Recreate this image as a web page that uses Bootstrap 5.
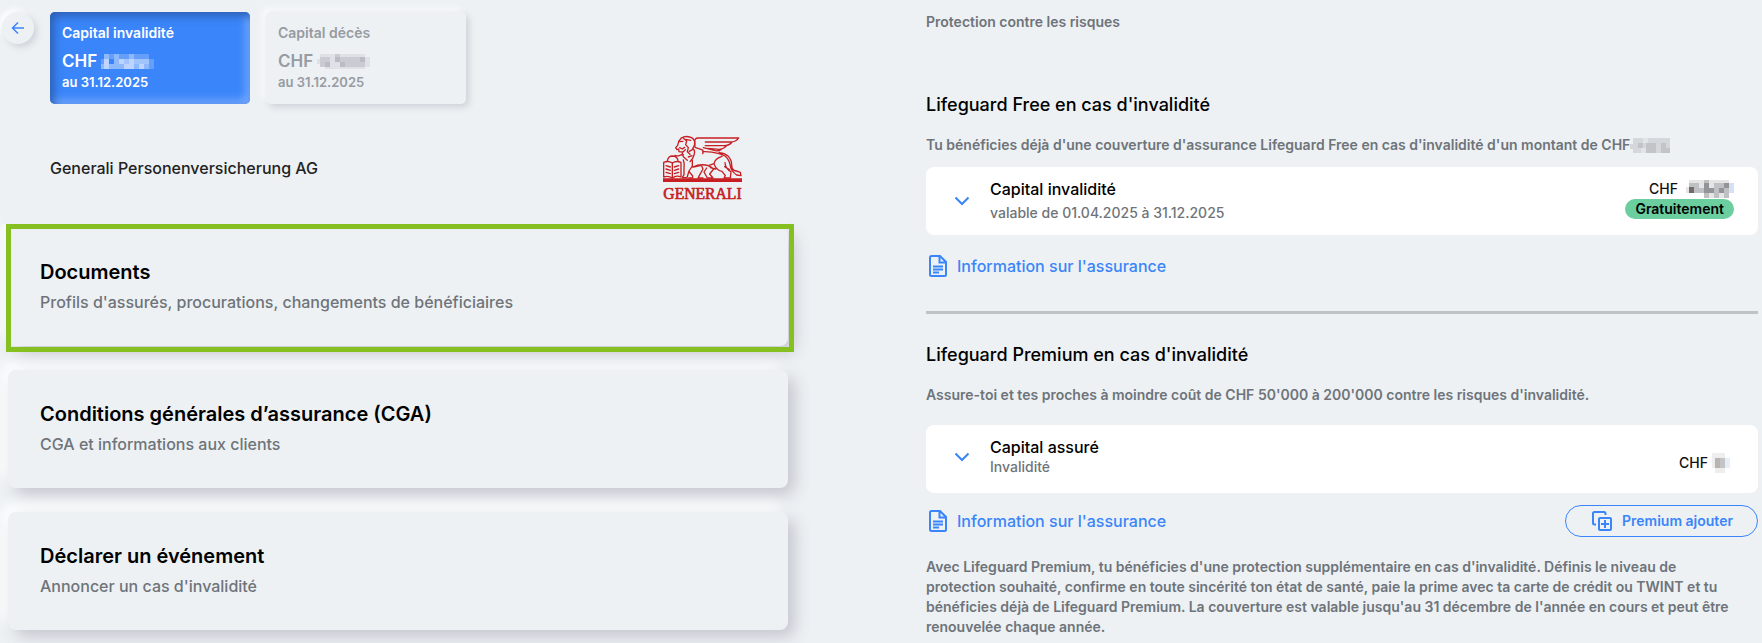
<!DOCTYPE html>
<html lang="fr">
<head>
<meta charset="utf-8">
<meta name="viewport" content="width=device-width, initial-scale=1">
<title>Protection contre les risques</title>
<link href="https://cdn.jsdelivr.net/npm/bootstrap@5.3.0/dist/css/bootstrap.min.css" rel="stylesheet">
<style>
  :root { --ground: #edf1f4; --accent: #3a85f9; --muted: #6e747a; }
  body { min-height: 100vh; background: var(--ground); color: #000; font-family: Inter, "Open Sans", sans-serif; font-weight: 500; font-size: 16px; line-height: 20px; }
  svg { display: block; flex: none; }
  .muted-text { color: var(--muted); }
  .accent { color: var(--accent); }
  .fs-13 { font-size: 13px; }
  .fs-14 { font-size: 14px; }
  .fs-18 { font-size: 18px; }
  .fs-20 { font-size: 20px; }
  .semi { font-weight: 600; }

  .pane-left { padding: 12px 93px 0 2px; }
  .pane-right { padding: 12px 4px 0 45px; }

  .back-btn { width: 32px; height: 32px; background: var(--ground); box-shadow: 3px 3px 7px #cfd1d8, -3px -3px 7px #fff; }
  .capital-tile { width: 200px; padding: 12px; border-radius: 5px; border: 0; text-align: left; background: var(--ground); color: #979ba2; box-shadow: 3px 3px 7px #cfd1d8, -4px -4px 6px #f9fafc; }
  .capital-tile.active { background: var(--accent); color: #fff; box-shadow: inset 4px 4px 8px #2b5fb4, inset -4px -4px 8px #79acff; }
  .tile-label { line-height: 18px; margin-bottom: 8px; }
  .tile-amount { font-size: 17px; line-height: 22px; }

  .insurer { background: var(--ground); z-index: 1; margin-top: 16px; padding: 16px 46px 24px 48px; color: #222; }
  .insurer svg { overflow: visible; }
  .panel-stack { margin: 4px 0 0 6px; gap: 24px; }
  .panel-link { padding: 32px 32px 34px; border-radius: 8px; background: var(--ground); color: #000; box-shadow: 7px 7px 16px #c6c7d0, -7px -7px 14px #fff; }
  .panel-link h2 { line-height: 24px; margin-bottom: 8px; }
  .highlight-frame { inset: -4px -6px -6px -2px; border: 5px solid #86bf20; z-index: 2; pointer-events: none; }

  .intro { margin-bottom: 61px; }
  .cover-title { line-height: 24px; margin-bottom: 18px; }
  .cover-lead { margin-bottom: 12px; }
  .cover-lead-wide { margin-bottom: 20px; }
  .cover-card { min-height: 68px; border-radius: 8px; background: #fff; padding: 12px 24px 12px 28px; }
  .cover-card .toggle { width: 16px; }
  .cover-card .cover-name { margin-left: 20px; }
  .amount { font-size: 14px; color: #111; }
  .free-badge { background: #6bce9f; color: #000; line-height: 20px; padding: 0 10px; border-radius: 10px; }
  .info-link { gap: 10px; padding-left: 3px; }
  .info-link-free { margin-top: 20px; }
  .rule { height: 3px; background: #bec3c6; opacity: 1; border: 0; margin: 34px 0 29px; }
  .add-btn { height: 32px; border: 1px solid var(--accent); border-radius: 16px; gap: 10px; padding: 0 24px 0 26px; background: transparent; }
  .explain { margin: 20px 0 0; }
</style>
</head>
<body>
<main class="container-fluid p-0">
  <div class="row g-0">
    <section class="col-6 pane-left">
      <div class="d-flex align-items-start gap-3">
        <button class="btn back-btn rounded-circle p-0 border-0 d-flex align-items-center justify-content-center" type="button" aria-label="Retour">
          <svg width="14" height="14" viewBox="0 0 14 14" fill="none" stroke="#3a85f9" stroke-width="1.5"><path d="M13 7H2M7 1.5 1.5 7 7 12.5"/></svg>
        </button>
        <button type="button" class="capital-tile active semi">
          <span class="d-block fs-14 tile-label">Capital invalidité</span>
          <span class="d-flex align-items-center tile-amount">CHF
            <svg class="ms-1" width="53" height="15" viewBox="0 0 53 15" shape-rendering="crispEdges" aria-hidden="true"><path fill="#669ffa" d="M3 0h45v5H3zM0 5h8v5H0zM48 5h5v10h-5z"/><path fill="#8db8fb" d="M3 0h5v5H3zM13 0h5v5h-5zM28 0h5v5h-5zM0 10h48v5H0zM13 5h35v5H13z"/><path fill="#bdd5fe" d="M3 5h5v10H3zM18 5h5v5h-5zM28 5h5v5h-5zM23 10h10v5H23zM38 10h5v5h-5z"/><path fill="#a1c4fd" d="M33 5h15v5H33zM23 5h5v5h-5z"/></svg>
          </span>
          <span class="d-block fs-13">au 31.12.2025</span>
        </button>
        <button type="button" class="capital-tile semi">
          <span class="d-block fs-14 tile-label">Capital décès</span>
          <span class="d-flex align-items-center tile-amount">CHF
            <svg class="ms-1" width="53" height="15" viewBox="0 0 53 15" shape-rendering="crispEdges" aria-hidden="true"><path fill="#dfe1e6" d="M3 0h45v15H8v-5H0V5h3zM48 3h5v10h-5z"/><path fill="#c9ccd2" d="M3 3h10v10H3zM23 3h25v10H23zM18 0h5v5h-5z"/><path fill="#b9bcc3" d="M8 8h5v5H8zM18 3h5v5h-5zM23 8h5v5h-5zM43 3h5v5h-5z"/></svg>
          </span>
          <span class="d-block fs-13">au 31.12.2025</span>
        </button>
      </div>

      <div class="insurer position-relative d-flex align-items-center justify-content-between">
        <span>Generali Personenversicherung AG</span>
        <svg width="79" height="64" viewBox="69 33 237 192" role="img" aria-label="Generali" fill="none" stroke="#c71f23" stroke-width="4" stroke-linejoin="round" stroke-linecap="round">
          <path fill="#c71f23" stroke="none" d="M69 160h237v11H69z"/>
          <path d="M71 112q14-6 26 2 12-8 26-2v44q-14-6-26 3-12-8-26-3zM97 114v43M78 122l13 4M78 132l13 4M78 142l13 4M116 122l-13 4M116 132l-13 4M116 142l-13 4"/>
          <path d="M82 108q2-15 16-15 13 1 16 13M105 91q10 4 17-1l8-1"/>
          <path d="M124 39q11-7 25-3 12 3 15 14 2 11-6 20 9 8 4 20-3 12-12 20M124 39l-8 10-3 12-6 7 4 6 5-2 1 8 12 1 7-7M116 50l13-1M130 40l10 8-3 11 8 9-3 12 8 8M119 68l8 4 7-5M126 82l4 13 12 11M137 43l15 3M157 74l-9 5M156 92l-11 4"/>
          <path d="M296 39H174q-10 0-10 12l1 16 20 7q8 3 3 12M296 39q-8 12-25 12h-75M276 51q-8 11-24 11h-56M260 62q-8 10-22 11l-34-3M244 73q-9 6-18 4l-36-9M188 80q24-1 46 5l12 4"/>
          <path d="M246 89q-13-11-7-6 17 2 26 11 11 12 10 28 1 15 14 16l12 4 2 10-13-2q-17-12-19-27-3-20-16-30z"/>
          <path d="M130 105q4 12 2 22v22l-5 9h14l6-20 10-15v-17M147 139l11 14v6h-12M158 126q25-11 47-4l17-6q3-16 24-22M205 122q10 5 16 10l-12 15 10 12h-17l-10-18 8-12M160 126l24-5 5 11-11 20-4 7h15M222 116q6 20 24 23l10 13-4 7h19l2-19q-17-9-18-27M211 128l16 4M268 134l-14-9"/>
          <text x="70" y="221" font-family="'Liberation Serif', serif" font-size="47" font-weight="400" fill="#c71f23" stroke="#c71f23" stroke-width="2">GENERALI</text>
        </svg>
      </div>

      <nav class="panel-stack d-flex flex-column">
        <div class="position-relative">
          <a href="#documents" class="panel-link d-block text-decoration-none">
            <h2 class="fs-20 semi">Documents</h2>
            <span class="d-block muted-text">Profils d'assurés, procurations, changements de bénéficiaires</span>
          </a>
          <div class="highlight-frame position-absolute"></div>
        </div>
        <a href="#cga" class="panel-link d-block text-decoration-none">
          <h2 class="fs-20 semi">Conditions générales d’assurance (CGA)</h2>
          <span class="d-block muted-text">CGA et informations aux clients</span>
        </a>
        <a href="#evenement" class="panel-link d-block text-decoration-none">
          <h2 class="fs-20 semi">Déclarer un événement</h2>
          <span class="d-block muted-text">Annoncer un cas d'invalidité</span>
        </a>
      </nav>
    </section>

    <section class="col-6 pane-right">
      <p class="intro fs-14 semi muted-text">Protection contre les risques</p>

      <h2 class="cover-title fs-18">Lifeguard Free en cas d'invalidité</h2>
      <p class="cover-lead d-flex align-items-center fs-14 semi muted-text">
        <span>Tu bénéficies déjà d'une couverture d'assurance Lifeguard Free en cas d'invalidité d'un montant de CHF</span>
        <svg width="40" height="15" viewBox="0 0 40 15" shape-rendering="crispEdges" aria-hidden="true"><path fill="#d4d7db" d="M3 0h37v15H3v-4H0V6h3z"/><path fill="#c2c4c7" d="M8 5h5v5H8zM16 5h10v10H16zM31 5h5v5h-5zM31 10h9v5h-9z"/><path fill="#e1e4e8" d="M13 0h5v5h-5zM11 10h5v5h-5z"/></svg>
      </p>
      <div class="cover-card d-flex align-items-start justify-content-between">
        <div class="d-flex align-items-center">
          <button type="button" class="toggle btn p-0 border-0" aria-label="Afficher le détail"><svg width="16" height="10" viewBox="0 0 16 10" fill="none" stroke="#3a85f9" stroke-width="2"><path d="m1.500 1.500 6.500 6.500 6.500-6.500"/></svg></button>
          <div class="cover-name">
            <div class="mb-1">Capital invalidité</div>
            <div class="fs-14 muted-text">valable de 01.04.2025 à 31.12.2025</div>
          </div>
        </div>
        <div class="d-flex flex-column align-items-end">
          <div class="amount d-flex align-items-center">CHF
            <svg class="ms-2" width="48" height="18" viewBox="0 0 48 18" shape-rendering="crispEdges" aria-hidden="true"><path fill="#e5e5e5" d="M3 0h40v18H18v-5H0V7h3z"/><path fill="#d5e2f3" d="M43 3h5v10h-5z"/><path fill="#bfc0c2" d="M3 3h10v5H3zM18 0h5v18h-5zM28 3h15v10H28zM28 13h5v5h-5zM38 13h5v5h-5zM8 8h10v5H8z"/><path fill="#929498" d="M18 3h5v10h-5zM23 8h5v5h-5zM33 8h5v5h-5zM38 3h5v5h-5z"/><path fill="#726b67" d="M3 7h5v6H3z"/></svg>
          </div>
          <span class="free-badge fs-14 semi mt-0">Gratuitement</span>
        </div>
      </div>
      <div class="d-flex">
        <a href="#info-free" class="info-link info-link-free d-flex align-items-center text-decoration-none accent">
          <svg width="18" height="22" viewBox="0 0 18 22" fill="none" stroke="#3a85f9" stroke-width="2"><path d="M11 1H2.500A1.500 1.500 0 0 0 1 2.500v17A1.500 1.500 0 0 0 2.500 21h13a1.500 1.500 0 0 0 1.500-1.500V7zM10.500 1v6.500H17M4 11.500h10M4 14.500h10M4 17.500h6"/></svg>
          <span>Information sur l'assurance</span>
        </a>
      </div>
      <hr class="rule">

      <h2 class="cover-title fs-18">Lifeguard Premium en cas d'invalidité</h2>
      <p class="cover-lead-wide fs-14 semi muted-text">Assure-toi et tes proches à moindre coût de CHF 50'000 à 200'000 contre les risques d'invalidité.</p>
      <div class="cover-card d-flex align-items-start justify-content-between">
        <div class="d-flex align-items-center">
          <button type="button" class="toggle btn p-0 border-0" aria-label="Afficher le détail"><svg width="16" height="10" viewBox="0 0 16 10" fill="none" stroke="#3a85f9" stroke-width="2"><path d="m1.500 1.500 6.500 6.500 6.500-6.500"/></svg></button>
          <div class="cover-name">
            <div>Capital assuré</div>
            <div class="fs-14 muted-text">Invalidité</div>
          </div>
        </div>
        <div class="amount d-flex align-items-center pt-3">CHF
          <svg class="ms-1 me-1" width="18" height="20" viewBox="0 0 18 20" shape-rendering="crispEdges" aria-hidden="true"><path fill="#eee" d="M0 0h13v20H3v-5H0z"/><path fill="#e8eef7" d="M13 5h5v10h-5z"/><path fill="#b9b4b1" d="M3 5h5v10H3z"/><path fill="#c2c4c6" d="M8 5h5v10H8z"/></svg>
        </div>
      </div>
      <div class="d-flex align-items-center justify-content-between mt-2 pt-1">
        <a href="#info-premium" class="info-link d-flex align-items-center text-decoration-none accent">
          <svg width="18" height="22" viewBox="0 0 18 22" fill="none" stroke="#3a85f9" stroke-width="2"><path d="M11 1H2.500A1.500 1.500 0 0 0 1 2.500v17A1.500 1.500 0 0 0 2.500 21h13a1.500 1.500 0 0 0 1.500-1.500V7zM10.500 1v6.500H17M4 11.500h10M4 14.500h10M4 17.500h6"/></svg>
          <span>Information sur l'assurance</span>
        </a>
        <button type="button" class="add-btn accent fs-14 semi d-flex align-items-center">
          <svg width="20" height="20" viewBox="0 0 20 20" fill="none" stroke="#3a85f9" stroke-width="2"><path d="M4 13.500H2.500A1.500 1.500 0 0 1 1 12V2.500A1.500 1.500 0 0 1 2.500 1H12a1.500 1.500 0 0 1 1.500 1.500V4"/><rect x="7" y="7" width="12" height="12" rx="1"/><path d="M13 9v8M9 13h8"/></svg>
          <span>Premium ajouter</span>
        </button>
      </div>
      <p class="explain fs-14 semi muted-text">Avec Lifeguard Premium, tu bénéficies d'une protection supplémentaire en cas d'invalidité. Définis le niveau de<br>protection souhaité, confirme en toute sincérité ton état de santé, paie la prime avec ta carte de crédit ou TWINT et tu<br>bénéficies déjà de Lifeguard Premium. La couverture est valable jusqu'au 31 décembre de l'année en cours et peut être<br>renouvelée chaque année.</p>
    </section>
  </div>
</main>
<script src="https://cdn.jsdelivr.net/npm/bootstrap@5.3.0/dist/js/bootstrap.bundle.min.js"></script>
</body>
</html>
